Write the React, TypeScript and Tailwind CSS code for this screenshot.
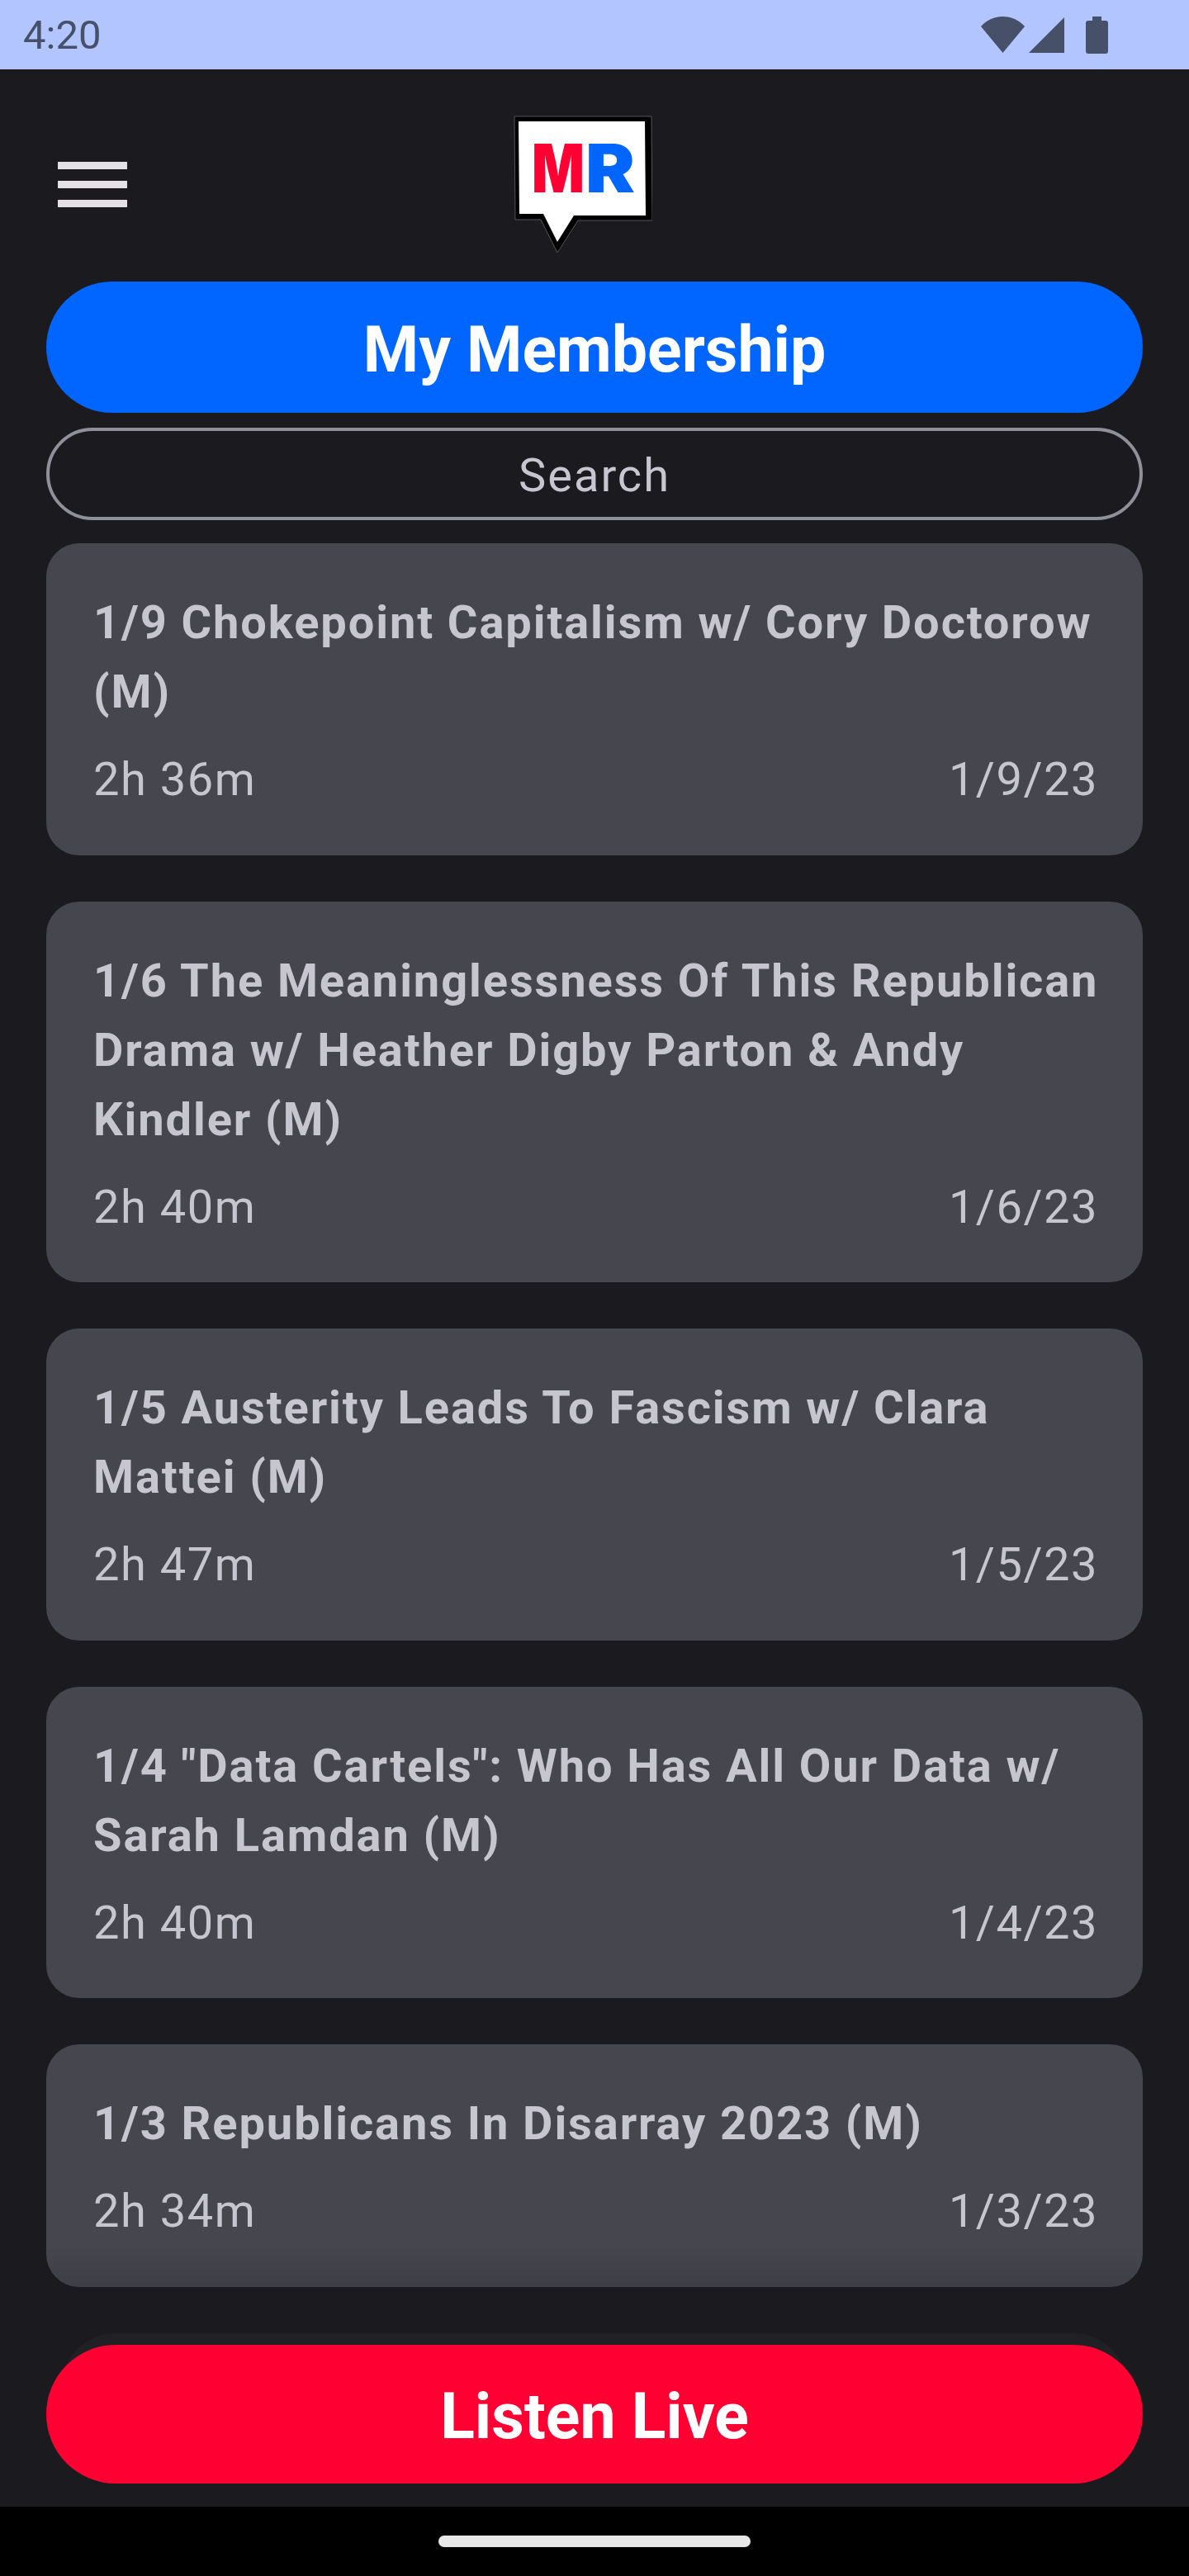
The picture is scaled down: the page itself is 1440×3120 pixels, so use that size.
const episodes = [
  { title: '1/9 Chokepoint Capitalism w/ Cory Doctorow (M)', length: '2h 36m', date: '1/9/23' },
  { title: '1/6 The Meaninglessness Of This Republican Drama w/ Heather Digby Parton & Andy Kindler (M)', length: '2h 40m', date: '1/6/23' },
  { title: '1/5 Austerity Leads To Fascism w/ Clara Mattei (M)', length: '2h 47m', date: '1/5/23' },
  { title: '1/4 "Data Cartels": Who Has All Our Data w/ Sarah Lamdan (M)', length: '2h 40m', date: '1/4/23' },
  { title: '1/3 Republicans In Disarray 2023 (M)', length: '2h 34m', date: '1/3/23' },
];

function StatusIcons() {
  return (
    <svg width="101" height="45" viewBox="0 0 101 45" className="block">
      <path d="M0 12 C14 -4 39 -4 53 12 L26.5 44 Z" fill="#475069" />
      <path d="M58 44 L101 1 V44 Z" fill="#475069" />
    </svg>
  );
}

function Logo() {
  return (
    <svg width="168" height="168" viewBox="0 0 168 168" className="block">
      <path d="M1 1 H167 L168 127 H78 L53 166 L33 126 H2 Z" fill="#000" stroke="#55555a" strokeWidth="1" />
      <path d="M6 7 H159 L160 121 H73 L53 153 L36 119 H7 Z" fill="#fff" />
      <text x="22" y="93" fontFamily="Inter, sans-serif" fontWeight="900" fontSize="81" fill="#ff0033" textLength="64" lengthAdjust="spacingAndGlyphs">M</text>
      <text x="87" y="93" fontFamily="Inter, sans-serif" fontWeight="900" fontSize="81" fill="#0066ff" textLength="60" lengthAdjust="spacingAndGlyphs">R</text>
    </svg>
  );
}

export default function App() {
  return (
    <div className="w-[1440px] h-[3120px] overflow-hidden flex flex-col bg-[#1b1b1f] font-['Roboto',sans-serif]">
      <div className="h-[84px] shrink-0 bg-[#b3c5ff] flex items-center justify-between pl-7 pr-[98px] text-[#475069]">
        <span className="text-[49px] leading-none">4:20</span>
        <div className="flex items-center gap-[26px]">
          <StatusIcons />
          <div className="flex flex-col items-center">
            <div className="w-[11px] h-[5px] bg-[#475069]" />
            <div className="w-[27px] h-[40px] rounded-[3px] bg-[#475069]" />
          </div>
        </div>
      </div>

      <div className="h-[257px] shrink-0 relative">
        <div className="flex flex-col gap-[14px] w-[84px] ml-[70px] pt-[112px]">
          <div className="h-[9px] bg-[#e4e1e6]" />
          <div className="h-[9px] bg-[#e4e1e6]" />
          <div className="h-[9px] bg-[#e4e1e6]" />
        </div>
        <div className="absolute left-[622px] top-[56px]">
          <Logo />
        </div>
      </div>

      <div className="mx-14 h-[159px] shrink-0 rounded-full bg-[#0066ff] flex items-center justify-center pt-[9px] text-white text-[77px] font-bold">
        My Membership
      </div>
      <div className="mx-14 mt-[18px] h-[112px] shrink-0 rounded-full border-4 border-[#90909a] flex items-center justify-center pt-1 text-[#c6c5d0] text-[56px] tracking-[2px]">
        Search
      </div>

      <div className="relative mt-7 mx-14 shrink-0 flex flex-col gap-14">
        {episodes.map((e) => (
          <div key={e.date} className="rounded-[40px] bg-[#46464f] text-[#c6c5d0] pl-[57px] pr-[54px] pt-[54px] pb-[59.5px] shrink-0 last:shadow-[0_5px_4px_#19191c]">
            <div className="mr-[-10px] text-[56px] leading-[84px] font-bold tracking-[1.9px]">{e.title}</div>
            <div className="flex justify-between mt-8 text-[56px] leading-[64px] tracking-[1.5px]">
              <span>{e.length}</span>
              <span>{e.date}</span>
            </div>
          </div>
        ))}
        <div className="absolute inset-x-0 bottom-0 h-[48px] rounded-b-[40px] bg-gradient-to-b from-transparent to-[#1b1b1f30]" />
      </div>

      <div className="mx-14 mt-[70px] h-[168px] shrink-0 rounded-full bg-[#ff0033] flex items-center justify-center pt-[9px] text-white text-[77px] font-bold shadow-[0_-33px_0_-19px_#212125]">
        Listen Live
      </div>

      <div className="mt-[28px] flex-1 bg-black flex justify-center pt-[35px]">
        <div className="w-[378px] h-[14px] rounded-full bg-[#e8e8e8]" />
      </div>
    </div>
  );
}
